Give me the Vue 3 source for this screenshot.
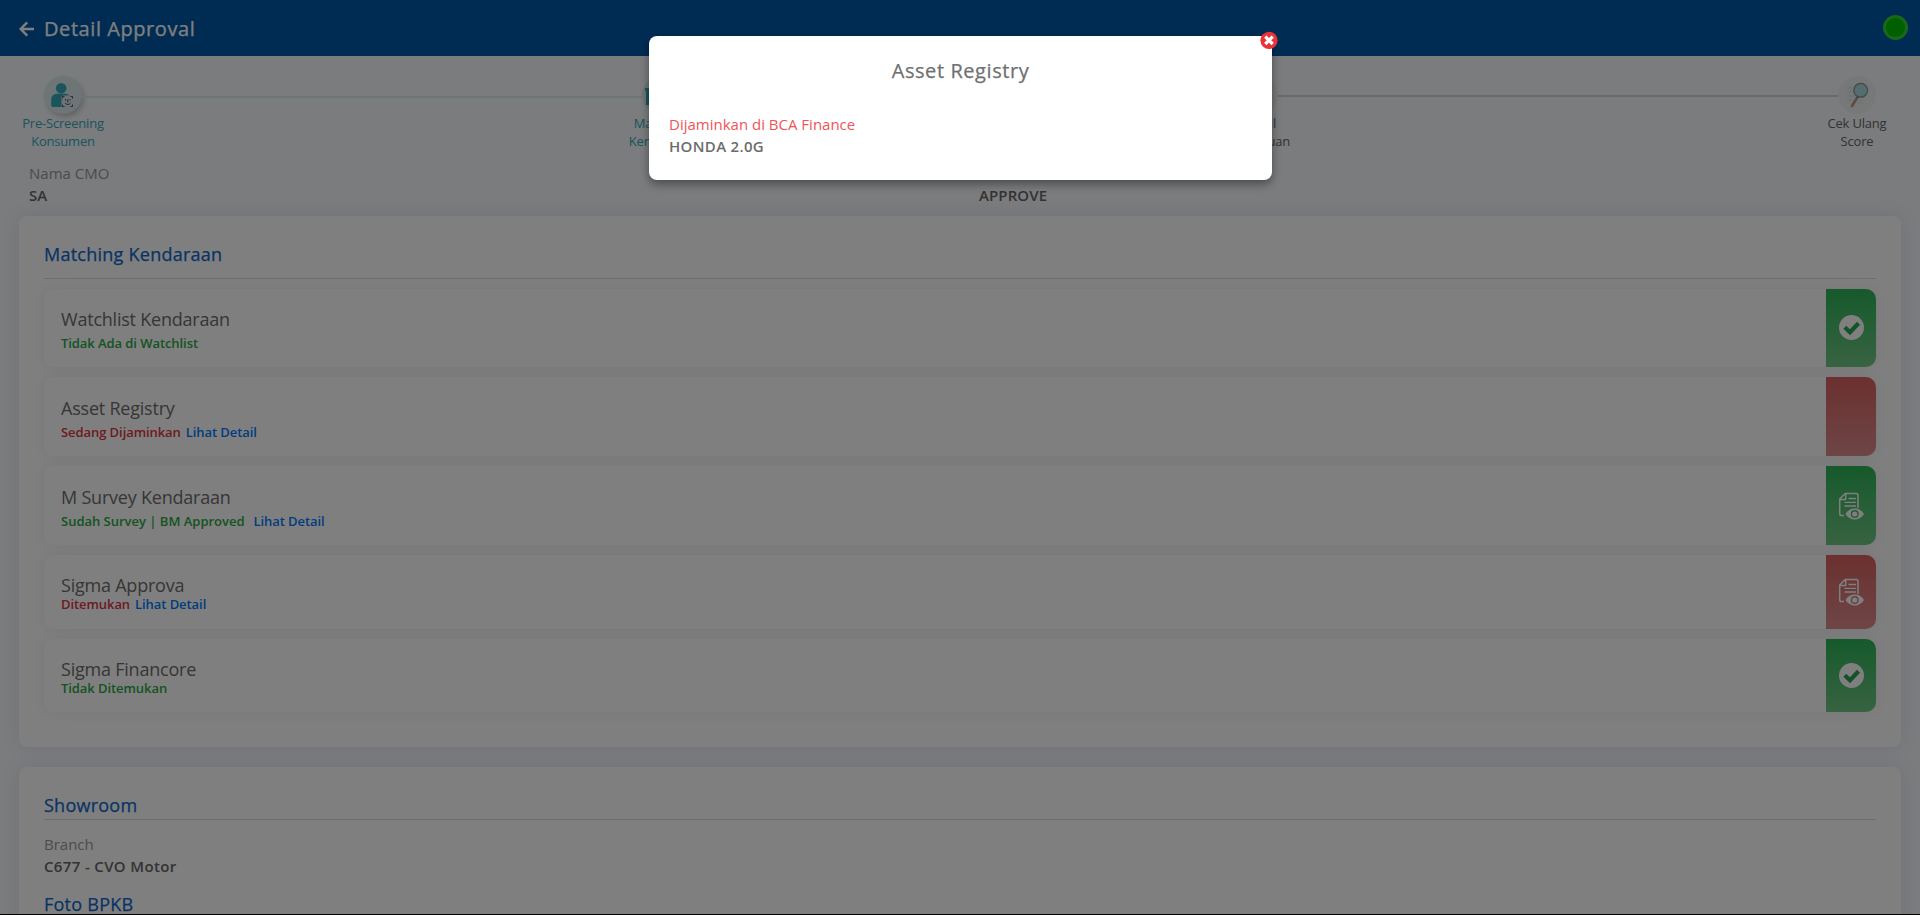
<script setup>
const rows = [
  { title: 'Watchlist Kendaraan', status: 'Tidak Ada di Watchlist', tone: 'green', icon: 'check', size: 'top h78' },
  { title: 'Asset Registry', status: 'Sedang Dijaminkan', tone: 'red', link: true, icon: '', size: 'h79' },
  { title: 'M Survey Kendaraan', status: 'Sudah Survey | BM Approved', tone: 'green', link: true, wide: true, icon: 'doc', size: 'h79' },
  { title: 'Sigma Approva', status: 'Ditemukan', tone: 'red', link: true, icon: 'doc', size: 'tight h74' },
  { title: 'Sigma Financore', status: 'Tidak Ditemukan', tone: 'green', icon: 'check', size: 'tight h73' },
]
</script>

<template>
  <div class="screen">
    <div class="page">
      <header class="bar">
        <svg class="back" width="16" height="16" viewBox="0 0 16 16"><path d="M8.200 1.300 1.600 8l6.600 6.700M1.800 8H15" fill="none" stroke="#fff" stroke-width="2.400" /></svg>
        <h1>Detail Approval</h1>
        <span class="online"></span>
      </header>

      <nav class="steps">
        <div class="step done">
          <span class="disc raised">
            <svg width="38" height="38" viewBox="0 0 38 38">
              <circle cx="17.200" cy="12.200" r="5.300" fill="#34aab8" />
              <path d="M7.200 29.500V24c0-4 2.500-6.200 6-6.200h8c3 0 5 2 5 5v8.200H10.500c-2 0-3.300-.4-3.300-1.500z" fill="#34aab8" />
              <rect x="17.500" y="19.500" width="12" height="12" rx="2" fill="#dce8ea" />
              <path d="M18.500 22.500v-2h2M26.500 20.500h2v2M28.500 28.500v2h-2M20.500 30.500h-2v-2M21.500 23v1.500M26 23v1.500M23.800 23v3h-.8M21 27c1.500 2 4 2 5.500 0" fill="none" stroke="#46586a" stroke-width="1" />
            </svg>
          </span>
          <span class="label">Pre-Screening<br>Konsumen</span>
        </div>
        <i class="track teal"></i>
        <div class="step done">
          <span class="disc">
            <svg width="38" height="38" viewBox="0 0 38 38"><path d="M3 12h4v-2h26v5h-2v14H4V15H3zM9 18h7v6H9z" fill="#34aab8" /></svg>
          </span>
          <span class="label">Matching<br>Kendaraan</span>
        </div>
        <i class="track teal"></i>
        <div class="step">
          <span class="disc grey"></span>
          <span class="label">Detail<br>Pengajuan</span>
        </div>
        <i class="track"></i>
        <div class="step">
          <span class="disc grey">
            <svg width="38" height="38" viewBox="0 0 38 38">
              <rect x="8" y="8" width="17" height="20" fill="#e6eeee" />
              <path d="M11 12h3M11 16h5M11 20h6M11 24h4" stroke="#cbd8d8" stroke-width="1" stroke-dasharray="2 1.500" />
              <path d="m19.500 21-5.500 9" stroke="#be9680" stroke-width="2.600" stroke-linecap="round" />
              <path d="m20.500 19.500-1.500 2.500" stroke="#888" stroke-width="1.600" />
              <circle cx="22.700" cy="14.300" r="6.900" fill="#a8dcde" stroke="#8c9093" stroke-width="1.300" />
            </svg>
          </span>
          <span class="label">Cek Ulang<br>Score</span>
        </div>
      </nav>

      <section class="info">
        <div><p class="key">Nama CMO</p><p class="value">SA</p></div>
        <div><p class="key">Status</p><p class="value approve">APPROVE</p></div>
      </section>

      <section class="card first">
        <h2 class="head">Matching Kendaraan</h2>
        <div v-for="r in rows" :key="r.title" class="row" :class="r.size">
          <div class="text">
            <h3>{{ r.title }}</h3>
            <p class="status" :class="{ loose: r.wide }"><span :class="r.tone">{{ r.status }}</span><a v-if="r.link" :class="{ wide: r.wide }">Lihat Detail</a></p>
          </div>
          <div class="side" :class="r.tone">
            <svg v-if="r.icon === 'check'" width="26" height="26" viewBox="0 0 26 26">
              <circle cx="13.500" cy="12.500" r="12.500" fill="#fff" />
              <path d="m6.800 12.200 5.200 5 8.500-9" fill="none" stroke="#28a750" stroke-width="4.200" />
            </svg>
            <svg v-else-if="r.icon === 'doc'" width="26" height="28" viewBox="0 0 26 28">
              <path d="M6 23.500H3.500q-1.800 0-1.800-1.800V7l5.500-5.500h11q1.800 0 1.800 1.800V16M2 7.500h5.700v-6" fill="none" stroke="#fff" stroke-width="1.500" stroke-linejoin="round" />
              <path d="M10.500 6.500h7.500M6.500 10.300h11.500M6.500 14h11.500" stroke="#fff" stroke-width="1.300" />
              <path d="M7.500 22c4.500-7.300 14-7.300 18.500 0-4.500 7.300-14 7.300-18.500 0z" fill="#fff" />
              <circle class="iris" cx="16.700" cy="22" r="3.300" />
            </svg>
          </div>
        </div>
      </section>

      <section class="card second">
        <h2 class="head">Showroom</h2>
        <p class="key">Branch</p>
        <p class="value branch">C677 - CVO Motor</p>
        <h2 class="photo">Foto BPKB</h2>
      </section>
      <div class="shade"></div>
    </div>

    <div class="dialog">
      <h2>Asset Registry</h2>
      <p class="alert">Dijaminkan di BCA Finance</p>
      <p class="unit">HONDA 2.0G</p>
      <svg class="close" width="18" height="18" viewBox="0 0 18 18">
        <circle cx="9" cy="9.300" r="8.600" fill="#ea3338" />
        <path d="m5.300 5.600 7.400 7.400M12.700 5.600l-7.400 7.400" stroke="#fff" stroke-width="3.200" />
      </svg>
    </div>
  </div>
</template>

<style>
html, body { margin: 0; overflow: hidden; background: #000; }
</style>

<style scoped>
* { box-sizing: border-box; }
h1, h2, h3, p { margin: 0; font-weight: 400; }
.screen { position: relative; height: 915px; background: #000; font-family: "Open Sans", "Noto Sans", sans-serif; color: #666; }
.page { position: relative; height: 914px; overflow: hidden; background: #f6f8fc; }
.shade { position: absolute; inset: 0; background: rgba(0, 0, 0, .5); }

.bar { display: flex; align-items: center; height: 56px; padding: 0 12px 0 19px; background: #0058a6; color: #fff; }
.back { margin: 1px 9px 0 0; }
.bar h1 { font-size: 20px; font-weight: 500; line-height: 28px; padding-top: 1px; letter-spacing: .57px; -webkit-text-stroke: .25px; }
.online { width: 25px; height: 25px; margin: -1px 0 0 auto; border-radius: 50%; border: 3px solid #30d030; background: #00c000; }

.steps { display: flex; align-items: flex-start; height: 102px; padding: 20px 44px 0; }
.step { display: flex; flex-direction: column; align-items: center; width: 38px; }
.disc { width: 38px; height: 38px; border-radius: 50%; background: #dcebee; }
.disc svg { display: block; }
.disc.raised { box-shadow: 2px 3px 5px rgba(0, 0, 0, .2); }
.disc.grey { background: #eef0f1; }
.label { width: 100px; text-align: center; font-size: 13px; line-height: 18px; letter-spacing: -.2px; color: #666; }
.done .label { color: #34aab8; }
.track { flex: 1; height: 2px; margin-top: 19px; background: #cfd2d5; }
.track.teal { margin-top: 20px; background: #dcebee; }

.info { display: grid; grid-template-columns: 950px 1fr; height: 58px; padding: 4px 0 0 29px; }
.key { font-size: 15px; line-height: 22px; color: #999; }
.value { font-size: 15px; line-height: 22px; font-weight: 600; color: #666; }
.approve { letter-spacing: .1px; }
.branch { letter-spacing: .35px; }

.card { margin: 0 19px; padding: 0 25px; border-radius: 8px; background: #fff; box-shadow: 0 0 18px rgba(80, 110, 150, .14); }
.first { height: 531px; padding-top: 24px; }
.second { height: 300px; margin-top: 20px; padding-top: 24px; }
.head, .photo { font-size: 18px; line-height: 28px; font-weight: 500; letter-spacing: .25px; -webkit-text-stroke: .25px; color: #1068c8; }
.head { border-bottom: 1px solid #dcdcdc; }
.first .head { height: 39px; margin-bottom: 10px; }
.second .head { height: 29px; margin-bottom: 13px; }
.photo { margin-top: 13px; }

.row { display: flex; margin-bottom: 10px; border-radius: 10px; background: #fff; box-shadow: 0 0 16px rgba(0, 0, 0, .07); }
.h78 { height: 78px; }
.h79 { height: 79px; }
.h74 { height: 74px; }
.h73 { height: 73px; }
.text { flex: 1; padding: 18px 0 0 17px; }
.text h3 { font-size: 18px; line-height: 26px; letter-spacing: -.22px; color: #6c6c6c; }
.status { padding-top: 1px; font-size: 13px; line-height: 20px; font-weight: 600; letter-spacing: -.07px; }
.status.loose span { letter-spacing: -.01px; }
.top .text { padding-top: 17px; }
.status a { margin-left: 5px; color: #007bff; }
.status a.wide { margin-left: 9px; }
.status .green { color: #28a745; }
.status .red { color: #dc3545; }
.tight .text h3 { line-height: 25px; }
.tight .status { padding-top: 0; line-height: 13px; }
.side { display: flex; align-items: center; justify-content: center; width: 50px; border-radius: 0 10px 10px 0; }
.side.green { background: linear-gradient(#2cb457, #70c684); --iris: #4fb76a; }
.side.red { background: linear-gradient(#d86060, #dc8c8c); --iris: #da7c7c; }
.iris { fill: #fff; stroke: var(--iris); stroke-width: 1.400; }

.dialog { position: absolute; left: 649px; top: 36px; width: 623px; height: 144px; padding: 20px 20px; border-radius: 8px; background: #fff; box-shadow: 0 4px 10px rgba(0, 0, 0, .4); }
.dialog h2 { text-align: center; font-size: 20px; line-height: 30px; font-weight: 500; letter-spacing: .57px; -webkit-text-stroke: .25px; color: #707070; }
.alert { margin-top: 27px; font-size: 15px; line-height: 22px; color: #f05458; }
.unit { font-size: 15px; line-height: 22px; font-weight: 600; letter-spacing: .33px; color: #6c6c6c; }
.close { position: absolute; right: -6px; top: -5px; }
</style>
